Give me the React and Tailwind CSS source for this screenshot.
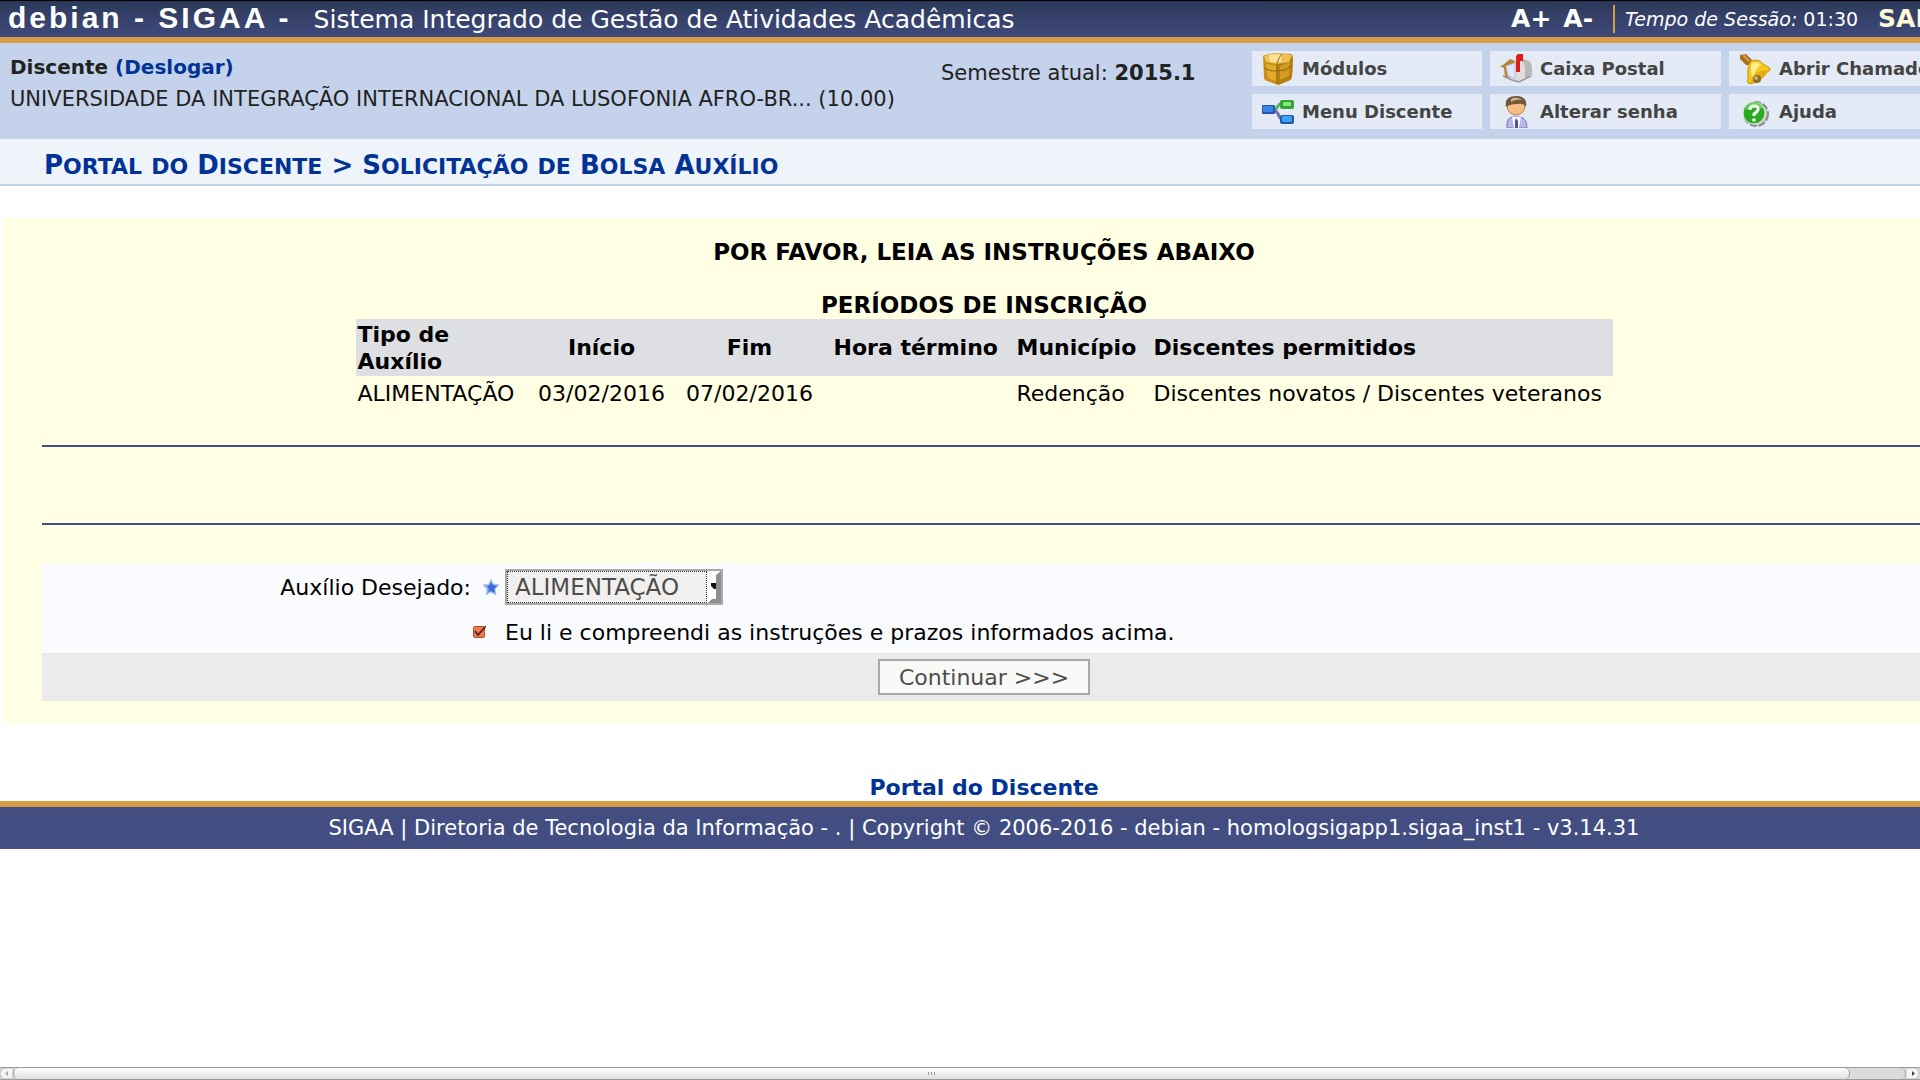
import React, { useState } from 'react';

const BoxIcon = () => (
  <svg width="32" height="32" viewBox="0 0 32 32">
    <path d="M1 4 Q1 2 3 2 L13 0 L29 1 Q31 2 31 4 L30 24 Q29 27 26 28 L16 32 L5 28 Q2 27 2 24 Z" fill="#c98f18" />
    <path d="M16 10 L31 4 L30 24 Q29 27 26 28 L16 32 Z" fill="#b57f14" />
    <path d="M2 3 L13 0 L30 2 L27 9 L15 11 L4 9 Z" fill="#efc352" />
    <path d="M7 2 L20 1 L19 9 L8 9 Z" fill="#fae29a" />
    <path d="M4 11 L14 13 V28 L6 25 Z" fill="#e2ab2c" />
    <path d="M18 13 L28 9 L27 23 L18 27 Z" fill="#d39b1f" />
    <path d="M2 15 Q9 19 16 18 Q24 18 30 13 M15 11 V31 M20 1 Q16 5 15 11" fill="none" stroke="#8d6511" strokeWidth="1" />
  </svg>
);

const MailboxIcon = () => (
  <svg width="32" height="32" viewBox="0 0 32 32">
    <path d="M0 13 L3 12 L10 6 L15 8 L12 25 L5 24 L4 15 Z" fill="#b88432" />
    <path d="M14 28 L14 14 Q14 6 20 5 L27 7 Q32 9 32 15 V22 L20 29 Z" fill="#b9b9b9" />
    <path d="M13 13 Q14 8 19 7 Q25 9 25 15 V27 L19 29 L12 26 Z" fill="#dedede" />
    <path d="M6 13 L15 10 L15 26 L8 23 Z" fill="#e3e6fb" stroke="#b5bae0" />
    <path d="M3 23 L12 27 L19 29 L31 23" fill="none" stroke="#999" strokeWidth="1.5" />
    <path d="M16 3 L18 1 H23 V8 H20 V19 H16 Z" fill="#dc1f14" />
  </svg>
);

const BellIcon = () => (
  <svg width="32" height="32" viewBox="0 0 32 32">
    <path d="M1 2 L7 1 L13 7 L11 12 L7 12 L1 6 Z" fill="#a8701d" />
    <path d="M3 2 L6 2 L11 8 L9 9 Z" fill="#cf9b48" />
    <path d="M12 8 Q20 5 24 11 L31 15 Q32 18 28 19 L17 29 Q12 32 9 30 Q8 28 9 26 Q8 18 10 11 Z" fill="#f5c61b" stroke="#b98409" strokeWidth="0.8" />
    <path d="M13 10 Q19 8 22 12 Q17 15 14 24 Q10 17 13 10 Z" fill="#ffee8b" />
    <path d="M12 29 Q14 21 22 18 Q29 16 29 18 Q27 24 18 29 Z" fill="#e5ad10" />
    <ellipse cx="18" cy="26" rx="4" ry="4" fill="#8f6d20" />
    <ellipse cx="17" cy="25" rx="2" ry="2" fill="#c9b078" />
  </svg>
);

const TreeIcon = () => (
  <svg width="32" height="32" viewBox="0 0 32 32">
    <path d="M11 14 Q14 14 16 10 Q18 7 21 7" fill="none" stroke="#58b455" strokeWidth="3" />
    <path d="M12 14 Q16 16 17 20 Q18 23 21 23" fill="none" stroke="#7272ac" strokeWidth="3" />
    <rect x="0" y="9" width="13" height="9" rx="1" fill="#2458a8" />
    <rect x="1" y="10" width="10" height="6" rx="1" fill="#3a86e6" />
    <rect x="18" y="4" width="14" height="9" rx="2" fill="#35a535" />
    <rect x="21" y="6" width="8" height="4" rx="1" fill="#86e47b" />
    <rect x="18" y="19" width="14" height="9" rx="2" fill="#2458a8" />
    <rect x="20" y="20" width="10" height="6" rx="1" fill="#3fa0fa" />
  </svg>
);

const PersonIcon = () => (
  <svg width="32" height="32" viewBox="0 0 32 32">
    <path d="M7 32 Q6 21 13 21 H20 Q27 22 27 32 Z" fill="#b7b7ec" stroke="#7674b5" />
    <path d="M12 21 H21 L19 32 H14 Z" fill="#f8f8ff" />
    <path d="M16 22 L18 25 L18 32 H15 V25 Z" fill="#55509c" />
    <circle cx="16" cy="10" r="9" fill="#f4bd85" stroke="#b98149" />
    <path d="M6 11 Q4 0 16 0 Q28 0 26 11 Q24 7 17 8 Q10 8 6 11 Z" fill="#76583b" />
    <path d="M11 3 Q16 0 22 4 Q16 3 11 6 Z" fill="#c9b093" />
  </svg>
);

const HelpIcon = () => (
  <svg width="32" height="32" viewBox="0 0 32 32">
    <circle cx="17" cy="18" r="12" fill="#c9c9c9" stroke="#8b8b8b" strokeWidth="2" strokeDasharray="7 2" />
    <circle cx="15" cy="17" r="11" fill="#2aaa20" stroke="#dff0dc" />
    <path d="M6 14 Q9 6 16 6 Q23 7 24 13 Q15 10 6 14 Z" fill="#69d257" />
    <path d="M11 14 Q11 10 15 10 Q20 10 19 14 Q18 16 15 18 V20" fill="none" stroke="#fff" strokeWidth="3" />
    <circle cx="15" cy="24" r="1.8" fill="#fff" />
  </svg>
);

const menuItems = [
  { label: 'Módulos', icon: BoxIcon },
  { label: 'Caixa Postal', icon: MailboxIcon },
  { label: 'Abrir Chamado', icon: BellIcon },
  { label: 'Menu Discente', icon: TreeIcon },
  { label: 'Alterar senha', icon: PersonIcon },
  { label: 'Ajuda', icon: HelpIcon },
];

const periods = [
  {
    type: 'ALIMENTAÇÃO',
    start: '03/02/2016',
    end: '07/02/2016',
    endTime: '',
    city: 'Redenção',
    allowed: 'Discentes novatos / Discentes veteranos',
  },
];

const Header = () => (
  <header className="flex h-[43px] items-center border-t border-b-6 border-t-black border-b-[#d99b45] bg-gradient-to-b from-[#2d3959] to-[#3f4a7c] text-white">
    <h1 className="flex items-baseline whitespace-nowrap pl-2">
      <span className="font-['Liberation_Sans',sans-serif] text-[30px] leading-9 font-bold tracking-widest">debian - SIGAA -</span>
      <span className="pl-[22px] text-[25px] leading-9">Sistema Integrado de Gestão de Atividades Acadêmicas</span>
    </h1>
    <div className="ml-auto flex items-center pr-6 whitespace-nowrap">
      <button type="button" className="text-[25px] leading-7 font-bold">A+</button>
      <button type="button" className="ml-3 text-[25px] leading-7 font-bold">A-</button>
      <div className="ml-5 h-7 border-l-2 border-[#d99b45]" />
      <span className="ml-[10px] text-[19px] leading-7">
        <em>Tempo de Sessão:</em> <span>01:30</span>
      </span>
      <a href="#sair" className="ml-5 text-[25px] leading-7 font-bold text-[#fff9d5]">SAIR</a>
    </div>
  </header>
);

const UserPanel = () => (
  <section className="flex h-24 bg-[#c4d2eb] text-xl text-[#222]">
    <div className="w-[941px] pt-2 pl-[10px]">
      <p className="leading-8 font-bold">
        Discente <a href="#deslogar" className="text-[#003395]">(Deslogar)</a>
      </p>
      <p className="text-[21px] leading-8 whitespace-nowrap">UNIVERSIDADE DA INTEGRAÇÃO INTERNACIONAL DA LUSOFONIA AFRO-BR... (10.00)</p>
    </div>
    <p className="pt-4 text-[21px] leading-7 whitespace-nowrap">
      Semestre atual: <strong>2015.1</strong>
    </p>
    <nav className="ml-auto grid grid-cols-[230px_231px_231px] grid-rows-[35px_35px] gap-2 pt-2 pr-2 text-lg">
      {menuItems.map(({ label, icon: Icon }) => (
        <a
          key={label}
          href="#menu"
          className="flex items-center gap-2 overflow-hidden bg-[#e4eaf6] pl-[10px] font-bold whitespace-nowrap text-[#444]"
        >
          <Icon />
          {label}
        </a>
      ))}
    </nav>
  </section>
);

const Word = ({ children }) => (
  <span className="inline-block text-[22px] uppercase first-letter:text-[26px]">{children}</span>
);

const Breadcrumb = () => (
  <h2 className="h-[47px] border-b-2 border-[#c4d2eb] bg-[#eff3fa] pl-11 text-[26px] leading-[52px] font-bold text-[#003395]">
    <a href="#portal">
      <Word>Portal</Word> <span className="text-[22px] uppercase">do</span> <Word>Discente</Word>
    </a>{' '}
    &gt; <Word>Solicitação</Word> <span className="text-[22px] uppercase">de</span> <Word>Bolsa</Word> <Word>Auxílio</Word>
  </h2>
);

const PeriodsTable = () => (
  <table className="mx-auto text-left">
    <caption className="text-[23px] leading-[27px] font-bold">PERÍODOS DE INSCRIÇÃO</caption>
    <thead className="bg-[#dedfe3]">
      <tr className="h-[57px]">
        <th className="w-[180px] pr-16 pl-0.5">Tipo de Auxílio</th>
        <th className="w-[148px] pr-4 text-center">Início</th>
        <th className="w-[148px] pr-4 text-center">Fim</th>
        <th className="w-[183px] pl-0.5 whitespace-nowrap">Hora término</th>
        <th className="w-[137px] pl-0.5">Município</th>
        <th className="w-[461px] pl-0.5">Discentes permitidos</th>
      </tr>
    </thead>
    <tbody>
      {periods.map((p) => (
        <tr key={p.type} className="h-[34px] whitespace-nowrap">
          <td className="pl-0.5">{p.type}</td>
          <td className="pr-4 text-center">{p.start}</td>
          <td className="pr-4 text-center">{p.end}</td>
          <td>{p.endTime}</td>
          <td className="pl-0.5">{p.city}</td>
          <td className="pl-0.5">{p.allowed}</td>
        </tr>
      ))}
    </tbody>
  </table>
);

const RequestForm = () => {
  const [aid, setAid] = useState('ALIMENTAÇÃO');
  const [agreed, setAgreed] = useState(true);

  return (
    <form onSubmit={(e) => e.preventDefault()} className="bg-[#fafbfe]">
      <div className="flex h-12 items-center">
        <label htmlFor="aid" className="flex w-[463px] items-center justify-end gap-3 pr-[6px]">
          Auxílio Desejado:
          <svg width="16" height="16" viewBox="0 0 16 16">
            <path d="M8 0 L10 5 L16 6 L12 10 L13 16 L8 13 L3 16 L4 10 L0 6 L6 5 Z" fill="#8fb4f2" stroke="#a9c6f7" strokeLinejoin="round" />
            <path d="M8 3 L10 6 L14 7 L11 10 L12 14 L8 12 L5 13 L6 10 L4 7 L7 6 Z" fill="#3b6ad6" />
          </svg>
        </label>
        <div className="flex h-9 w-[218px] border-2 border-[#a9a9a9] bg-[#f1f0ee]">
          <select
            id="aid"
            value={aid}
            onChange={(e) => setAid(e.target.value)}
            className="w-[200px] appearance-none border border-dotted border-[#333] pl-[7px] text-[23px] text-[#4d4d4d] outline-none"
          >
            <option>ALIMENTAÇÃO</option>
          </select>
          <svg width="14" height="32" viewBox="0 0 14 32">
            <path d="M0 0 H14 L9 5 V28 L4 32 H0 Z" fill="#fcfcfb" />
            <path d="M14 0 V32 H1 L5 28 H9 V4 Z" fill="#8e8e8e" />
            <path d="M4 12 H9 V18 H7 L4 15 Z" fill="#111" />
          </svg>
        </div>
      </div>
      <div className="flex h-[42px] items-center pl-[430px]">
        <span className="grid size-[14px] place-items-center">
          <input
            id="agree"
            type="checkbox"
            checked={agreed}
            onChange={(e) => setAgreed(e.target.checked)}
            className="col-start-1 row-start-1 size-3 appearance-none rounded-xs border border-[#b4502b] bg-[#ee7b50]"
          />
          {agreed && (
            <svg className="pointer-events-none col-start-1 row-start-1" width="14" height="14" viewBox="0 0 14 14">
              <path d="M3 6 L6 10 L14 1" fill="none" stroke="#4f2a1c" strokeWidth="1.8" />
            </svg>
          )}
        </span>
        <label htmlFor="agree" className="pl-[19px]">Eu li e compreendi as instruções e prazos informados acima.</label>
      </div>
      <div className="flex h-12 items-center justify-center bg-[#ebebeb]">
        <button type="submit" className="h-9 w-[212px] border-2 border-[#a9a9a9] bg-[#f9f9f7] text-[#4d4d4d]">
          Continuar &gt;&gt;&gt;
        </button>
      </div>
    </form>
  );
};

const ScrollBar = () => (
  <div className="mt-auto flex h-[13px] border-y border-[#9c9b99] bg-[#dcdbd9]">
    <svg width="13" height="11" viewBox="0 0 13 11">
      <path d="M13 0 H4 Q0 1 0 5.500 Q0 10 4 11 H13 Z" fill="#f4f4f3" stroke="#bbb" />
      <path d="M8 3 L5 5.500 L8 8 Z" fill="#a5a5a5" />
    </svg>
    <div className="flex flex-1 items-center justify-center gap-0.5 rounded-full border-x border-[#9c9b99] bg-gradient-to-b from-white to-[#e0dfdd]">
      <i className="h-[3px] w-px bg-[#999]" />
      <i className="h-[3px] w-px bg-[#999]" />
      <i className="h-[3px] w-px bg-[#999]" />
    </div>
    <div className="w-14 rounded-r-full border-r border-[#aaa]" />
    <svg width="14" height="11" viewBox="0 0 14 11">
      <path d="M0 0 H9 Q13 1 13 5.500 Q13 10 9 11 H0 Z" fill="#f6f6f5" stroke="#bbb" />
      <path d="M6 3 L9 5.500 L6 8 Z" fill="#444" />
    </svg>
  </div>
);

export default function App() {
  return (
    <div className="flex min-h-screen flex-col overflow-hidden bg-white font-['DejaVu_Sans',sans-serif] text-[22px] leading-[27px] text-black">
      {/* Page is a little wider than the window, as the scroll bar shows */}
      <div className="-mr-12">
        <Header />
        <UserPanel />
        <Breadcrumb />

        <main className="mx-[3px] mt-8 bg-[#ffffe4] px-[39px] pt-5 pb-[22px]">
          <p className="mb-[26px] text-center text-[23px] leading-7 font-bold">POR FAVOR, LEIA AS INSTRUÇÕES ABAIXO</p>
          <PeriodsTable />
          <hr className="mt-[35px] border-t-2 border-[#424e82]" />
          <hr className="mt-[76px] mb-[38px] border-t-2 border-[#424e82]" />
          <RequestForm />
        </main>

        <p className="mt-[51px] text-center leading-[27px] font-bold">
          <a href="#portal" className="text-[#003395]">Portal do Discente</a>
        </p>
        <footer className="border-t-6 border-[#d99b45] bg-[#424e82] text-center text-[21px] leading-[42px] text-white">
          SIGAA | Diretoria de Tecnologia da Informação - . | Copyright © 2006-2016 - debian - homologsigapp1.sigaa_inst1 - v3.14.31
        </footer>
      </div>
      <ScrollBar />
    </div>
  );
}
